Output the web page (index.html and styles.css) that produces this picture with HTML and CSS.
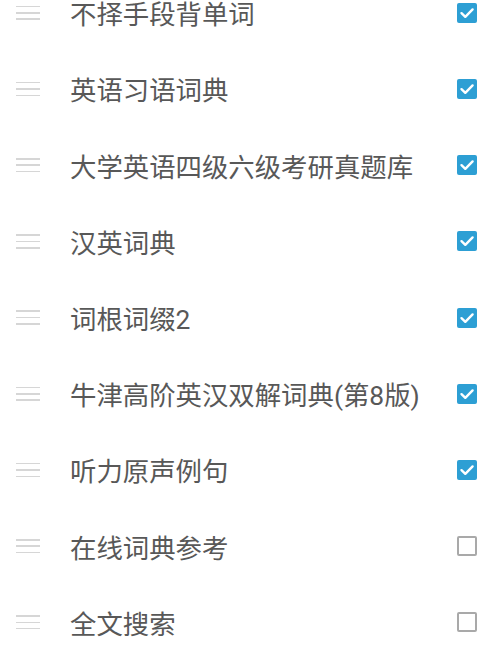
FILE: index.html
```html
<!DOCTYPE html>
<html lang="zh">
<head>
<meta charset="utf-8">
<link rel="stylesheet" href="styles.css">
</head>
<body>
<ul class="list">
  <li class="row"><span class="handle"><i></i><i></i><i></i></span><span class="label">不择手段背单词</span><span class="box on"><svg viewBox="0 0 20 20"><path d="M4.5 10.2 L8.3 13.8 L15.6 6.4"/></svg></span></li>
  <li class="row"><span class="handle"><i></i><i></i><i></i></span><span class="label">英语习语词典</span><span class="box on"><svg viewBox="0 0 20 20"><path d="M4.5 10.2 L8.3 13.8 L15.6 6.4"/></svg></span></li>
  <li class="row"><span class="handle"><i></i><i></i><i></i></span><span class="label">大学英语四级六级考研真题库</span><span class="box on"><svg viewBox="0 0 20 20"><path d="M4.5 10.2 L8.3 13.8 L15.6 6.4"/></svg></span></li>
  <li class="row"><span class="handle"><i></i><i></i><i></i></span><span class="label">汉英词典</span><span class="box on"><svg viewBox="0 0 20 20"><path d="M4.5 10.2 L8.3 13.8 L15.6 6.4"/></svg></span></li>
  <li class="row"><span class="handle"><i></i><i></i><i></i></span><span class="label">词根词缀2</span><span class="box on"><svg viewBox="0 0 20 20"><path d="M4.5 10.2 L8.3 13.8 L15.6 6.4"/></svg></span></li>
  <li class="row"><span class="handle"><i></i><i></i><i></i></span><span class="label">牛津高阶英汉双解词典(第8版)</span><span class="box on"><svg viewBox="0 0 20 20"><path d="M4.5 10.2 L8.3 13.8 L15.6 6.4"/></svg></span></li>
  <li class="row"><span class="handle"><i></i><i></i><i></i></span><span class="label">听力原声例句</span><span class="box on"><svg viewBox="0 0 20 20"><path d="M4.5 10.2 L8.3 13.8 L15.6 6.4"/></svg></span></li>
  <li class="row"><span class="handle"><i></i><i></i><i></i></span><span class="label">在线词典参考</span><span class="box"></span></li>
  <li class="row"><span class="handle"><i></i><i></i><i></i></span><span class="label">全文搜索</span><span class="box"></span></li>
</ul>
</body>
</html>
```
FILE: styles.css
```css
html, body {
  margin: 0;
  padding: 0;
  background: #ffffff;
  overflow: hidden;
}
.list {
  list-style: none;
  margin: -25.3px 0 0 0;
  padding: 0;
}
.row {
  height: 76.2px;
  display: flex;
  align-items: center;
  padding: 0 23px 0 16px;
}
.handle {
  width: 24px;
  display: flex;
  flex-direction: column;
  gap: 4.8px;
  margin-right: 30px;
}
.handle i {
  display: block;
  height: 1.6px;
  background: #d6d6d6;
}
.label {
  flex: 1;
  font-family: "Roboto", "Noto Sans CJK SC", sans-serif;
  font-size: 26.4px;
  font-weight: 400;
  color: #585858;
  white-space: nowrap;
}
.box {
  width: 20px;
  height: 20px;
  box-sizing: border-box;
  border: 2.2px solid #a9a9a9;
  border-radius: 2px;
  display: flex;
}
.box.on {
  border: none;
  background: #2d9fd4;
}
.box svg {
  width: 20px;
  height: 20px;
}
.box svg path {
  fill: none;
  stroke: #ffffff;
  stroke-width: 2.4;
  stroke-linecap: round;
  stroke-linejoin: round;
}
```
